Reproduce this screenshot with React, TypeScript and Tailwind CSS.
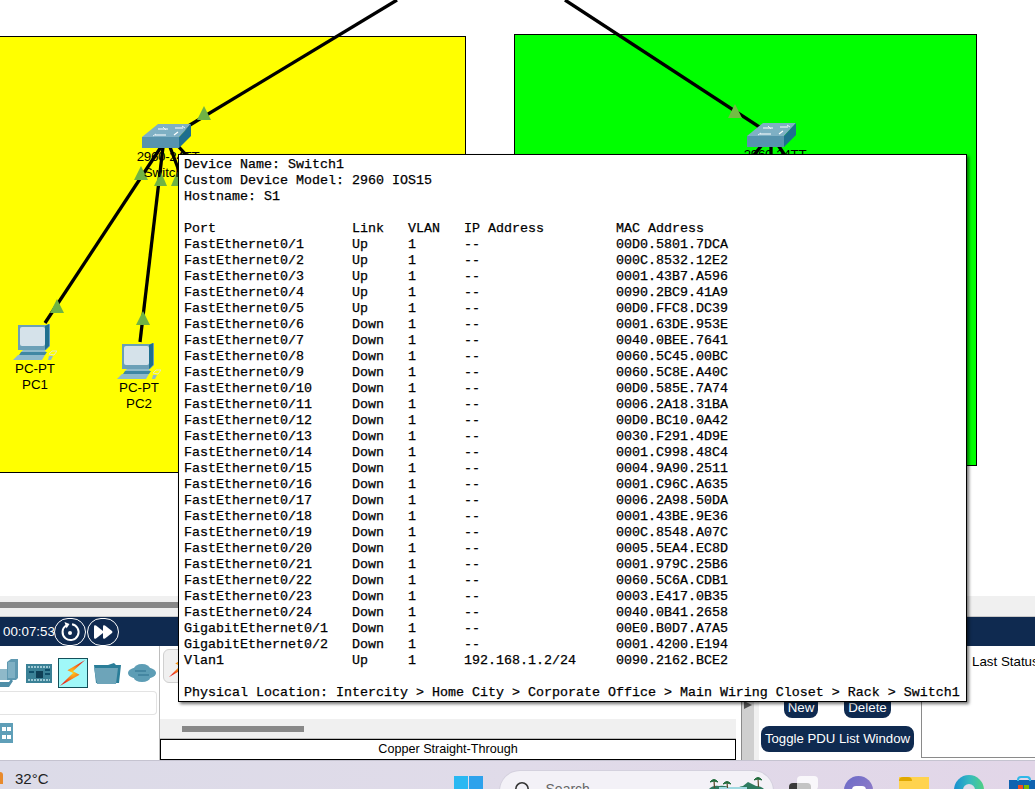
const ports: [string, string, string, string][] = [
  ["FastEthernet0/1", "Up", "--", "00D0.5801.7DCA"],
  ["FastEthernet0/2", "Up", "--", "000C.8532.12E2"],
  ["FastEthernet0/3", "Up", "--", "0001.43B7.A596"],
  ["FastEthernet0/4", "Up", "--", "0090.2BC9.41A9"],
  ["FastEthernet0/5", "Up", "--", "00D0.FFC8.DC39"],
  ["FastEthernet0/6", "Down", "--", "0001.63DE.953E"],
  ["FastEthernet0/7", "Down", "--", "0040.0BEE.7641"],
  ["FastEthernet0/8", "Down", "--", "0060.5C45.00BC"],
  ["FastEthernet0/9", "Down", "--", "0060.5C8E.A40C"],
  ["FastEthernet0/10", "Down", "--", "00D0.585E.7A74"],
  ["FastEthernet0/11", "Down", "--", "0006.2A18.31BA"],
  ["FastEthernet0/12", "Down", "--", "00D0.BC10.0A42"],
  ["FastEthernet0/13", "Down", "--", "0030.F291.4D9E"],
  ["FastEthernet0/14", "Down", "--", "0001.C998.48C4"],
  ["FastEthernet0/15", "Down", "--", "0004.9A90.2511"],
  ["FastEthernet0/16", "Down", "--", "0001.C96C.A635"],
  ["FastEthernet0/17", "Down", "--", "0006.2A98.50DA"],
  ["FastEthernet0/18", "Down", "--", "0001.43BE.9E36"],
  ["FastEthernet0/19", "Down", "--", "000C.8548.A07C"],
  ["FastEthernet0/20", "Down", "--", "0005.5EA4.EC8D"],
  ["FastEthernet0/21", "Down", "--", "0001.979C.25B6"],
  ["FastEthernet0/22", "Down", "--", "0060.5C6A.CDB1"],
  ["FastEthernet0/23", "Down", "--", "0003.E417.0B35"],
  ["FastEthernet0/24", "Down", "--", "0040.0B41.2658"],
  ["GigabitEthernet0/1", "Down", "--", "00E0.B0D7.A7A5"],
  ["GigabitEthernet0/2", "Down", "--", "0001.4200.E194"],
  ["Vlan1", "Up", "192.168.1.2/24", "0090.2162.BCE2"],
];

const row = (p: string, l: string, v: string, ip: string, mac: string) =>
  p.padEnd(21) + l.padEnd(7) + v.padEnd(7) + ip.padEnd(19) + mac;

const tooltipText = [
  "Device Name: Switch1",
  "Custom Device Model: 2960 IOS15",
  "Hostname: S1",
  "",
  row("Port", "Link", "VLAN", "IP Address", "MAC Address"),
  ...ports.map(([p, l, ip, mac]) => row(p, l, "1", ip, mac)),
  "",
  "Physical Location: Intercity > Home City > Corporate Office > Main Wiring Closet > Rack > Switch1",
].join("\n");

function Lightning({ size = 30 }: { size?: number }) {
  return (
    <svg width={size} height={size} viewBox="0 0 30 30">
      <defs>
        <radialGradient id="bolt" cx="50%" cy="48%" r="50%">
          <stop offset="0%" stopColor="#ffd21a" />
          <stop offset="55%" stopColor="#f7731c" />
          <stop offset="100%" stopColor="#e8281c" />
        </radialGradient>
      </defs>
      <path d="M28 1 L9 12 L15 15 L1 29 L22 17 L15 13 Z" fill="url(#bolt)" />
    </svg>
  );
}

function SwitchIcon() {
  return (
    <svg width="50" height="24" viewBox="0 0 50 24">
      <path d="M0 13 L16 0 L49 0 L37 13 Z" fill="#7fb0c4" />
      <path d="M0 13 H37 V24 H0 Z" fill="#5793ad" />
      <path d="M37 13 L49 0 V12 L37 24 Z" fill="#1f6f8f" />
      <path d="M13 11 H24 M32 11 L36 8 M16 5 H26 M33 4 H41" stroke="#fff" strokeWidth="1.2" />
      <path d="M11 12 L14 10 M21 3 L24 6 M40 2 L43 4" stroke="#e8f4f8" strokeWidth="1" />
    </svg>
  );
}

function PcIcon() {
  return (
    <svg width="44" height="37" viewBox="0 0 44 37">
      <path d="M5 1 L33 1 L37 0 V22 L33 26 H5 Z" fill="#6ba0b7" />
      <path d="M32 2 L36 0 V22 L32 26 Z" fill="#1f6f8f" />
      <rect x="7" y="3" width="25" height="19" rx="2" fill="#d5e2ea" />
      <path d="M10 26 H32 L33 28 H8 Z" fill="#8fbacb" />
      <path d="M8 28 H34 L32 31 H6 Z" fill="#3f87a3" />
      <path d="M5 31 H32 L29 36 H0 Z" fill="#8fbacb" />
      <path d="M36 30 L39 27 H44 L41 31 Z" fill="none" stroke="#e4e8c8" strokeWidth="1" />
      <path d="M35 36 L36 32 H40 L38 36 Z" fill="#8fb9c9" />
    </svg>
  );
}

function Replay() {
  return (
    <svg width="22" height="22" viewBox="0 0 22 22" fill="none">
      <path d="M7 4.5 A8 8 0 1 0 13 3.2" stroke="#fff" strokeWidth="2" />
      <path d="M5.5 1 L10.5 3 L7.5 7.5 Z" fill="#fff" />
      <circle cx="11" cy="12" r="2" fill="#fff" />
    </svg>
  );
}

function FastForward() {
  return (
    <svg width="20" height="16" viewBox="0 0 20 16" fill="#fff">
      <path d="M1 2.5 Q1 0.5 3 1.5 L10 7 Q11 8 10 9 L3 14.5 Q1 15.5 1 13.5 Z" />
      <path d="M10 2.5 Q10 0.5 12 1.5 L19 7 Q20 8 19 9 L12 14.5 Q10 15.5 10 13.5 Z" />
    </svg>
  );
}

function Palm({ x, y, h }: { x: number; y: number; h: number }) {
  return (
    <g>
      <path d={`M${x} ${y} L${x + 0.5} ${y + h}`} stroke="#5a4a2a" strokeWidth="1.2" />
      <path d={`M${x - 4} ${y + 2} Q${x} ${y - 3} ${x + 4} ${y + 2} Q${x} ${y} ${x - 4} ${y + 2} Z`} fill="#1f6a3a" stroke="#1f6a3a" />
    </g>
  );
}

export default function App() {
  return (
    <div className="relative flex h-[789px] w-[1035px] flex-col overflow-hidden bg-white font-['Liberation_Sans',sans-serif] text-[13.33px] text-black">
      {/* Logical workspace */}
      <div className="relative h-[596px] shrink-0 overflow-hidden bg-white">
        <div className="absolute left-[-2px] top-[36px] h-[437px] w-[468px] border border-black bg-[#ffff00]" />
        <div className="absolute left-[514px] top-[34px] h-[432px] w-[463px] border border-black bg-[#00ff00]" />

        <svg className="absolute inset-0" width="1035" height="596" viewBox="0 0 1035 596">
          <g stroke="#000" strokeWidth="3.3" fill="none">
            <path d="M397 0 L175 134" />
            <path d="M565 0 L770 134" />
            <path d="M161 147 L45 323" />
            <path d="M163 147 L140 342" />
            <path d="M170 147 L190 200" />
            <path d="M178 146 L200 170" />
            <path d="M762 145 L750 160" />
            <path d="M771 145 L771 160" />
            <path d="M778 145 L788 160" />
          </g>
          <g fill="#70b344">
            <path d="M204 106 L211 120 L197 120 Z" />
            <path d="M141 166 L148 180 L134 180 Z" />
            <path d="M161 172 L167 186 L154 186 Z" />
            <path d="M177 172 L184 186 L171 186 Z" />
            <path d="M57 299 L64 313 L50 313 Z" />
            <path d="M143 311 L150 325 L136 325 Z" />
          </g>
          <path d="M735 104 L742 118 L728 118 Z" fill="#72bd44" />
        </svg>

        <div className="absolute left-[142px] top-[124px]">
          <SwitchIcon />
        </div>
        <div className="absolute left-[747px] top-[123px]">
          <SwitchIcon />
        </div>
        <div className="absolute left-[118px] top-[149px] w-[100px] text-center leading-4">
          <div className="tracking-[-0.3px]">2960-24TT</div>
          <div className="pr-[2px]">Switch1</div>
        </div>
        <div className="absolute left-[725px] top-[147px] w-[100px] text-center leading-4 tracking-[-0.3px]">2960-24TT</div>

        <div className="absolute left-[13px] top-[324px]">
          <PcIcon />
        </div>
        <div className="absolute left-[-5px] top-[361px] w-[80px] text-center leading-4">
          <div>PC-PT</div>
          <div>PC1</div>
        </div>
        <div className="absolute left-[117px] top-[343px]">
          <PcIcon />
        </div>
        <div className="absolute left-[99px] top-[380px] w-[80px] text-center leading-4">
          <div>PC-PT</div>
          <div>PC2</div>
        </div>
      </div>

      {/* Scroll band */}
      <div className="flex h-[20px] shrink-0 items-start bg-[#f0f0f0] pt-[6px]">
        <div className="h-[6px] w-[180px] bg-[#888888]" />
      </div>

      {/* Realtime bar */}
      <div className="flex h-[30px] shrink-0 items-center border-t border-[#c8c8c8] bg-[#0f2a50] pl-[3px] text-white">
        <span className="w-[50px]">00:07:53</span>
        <div className="ml-[1px] flex h-[28px] w-[32px] items-center justify-center rounded-full border border-white">
          <Replay />
        </div>
        <div className="ml-px flex h-[28px] w-[32px] items-center justify-center rounded-full border border-white">
          <FastForward />
        </div>
      </div>

      {/* Bottom panels */}
      <div className="flex h-[114px] shrink-0 bg-white">
        <div className="flex w-[160px] shrink-0 flex-col border-r border-[#bdbdbd]">
          <div className="flex h-[45px] items-center pt-[9px]">
            <svg width="18" height="30" viewBox="0 0 18 30">
              <path d="M7 4 L11 1 H18 V20 L16 22 H7 Z" fill="#5f99b1" />
              <path d="M8 4 H15 V20 H8 Z" fill="#7fb0c4" />
              <path d="M0 11 H7 V22 H0 Z" fill="#8fb9c9" />
              <path d="M0 24 H9 L11 21 L13 23 L9 29 H0 Z" fill="#4f8ea8" />
            </svg>
            <svg className="ml-[8px]" width="26" height="19" viewBox="0 0 26 19">
              <rect width="26" height="19" fill="#3a8196" />
              <rect x="10" y="7" width="7" height="7" fill="#0f3f55" />
              <path d="M2 3 H24 M2 16 H24" stroke="#9cc8d4" strokeWidth="2" strokeDasharray="2 1" />
              <path d="M19 6 H24 M19 10 H24 M3 8 H8" stroke="#0f4f6a" strokeWidth="2" />
            </svg>
            <div className="ml-[6px] flex h-[30px] w-[30px] items-center justify-center border border-[#14505a] bg-[#a0f8f8]">
              <Lightning size={28} />
            </div>
            <svg className="ml-[6px]" width="27" height="21" viewBox="0 0 27 21">
              <path d="M0 2 H14 L20 0 L22 2 H27 L25 20 H2 Z" fill="#2a7d98" />
              <path d="M0 5 H24 L22 21 H3 Z" fill="#6da4b9" />
            </svg>
            <svg className="ml-[7px]" width="28" height="18" viewBox="0 0 28 18">
              <ellipse cx="14" cy="9" rx="14" ry="6.5" fill="#5d9db5" />
              <ellipse cx="14" cy="5" rx="8" ry="5" fill="#5d9db5" />
              <ellipse cx="14" cy="14" rx="8" ry="4" fill="#5d9db5" />
              <path d="M7 7 H18 M10 11 H21" stroke="#3c7f9a" strokeWidth="1.5" />
            </svg>
          </div>
          <div className="h-[24px] w-[157px] rounded-r-sm border border-l-0 border-[#e3e3e3]" />
          <div className="mt-[8px] grid h-[20px] w-[13px] grid-cols-2 place-items-center bg-[#5f9fb8] p-[2px]">
            <span className="h-[4px] w-[4px] bg-white" />
            <span className="h-[4px] w-[4px] bg-white" />
            <span className="h-[4px] w-[4px] bg-white" />
            <span className="h-[4px] w-[4px] bg-white" />
          </div>
        </div>

        <div className="flex w-[576px] shrink-0 flex-col">
          <div className="h-[73px] pl-[3px] pt-[3px]">
            <div className="flex h-[34px] w-[33px] items-center justify-center rounded-md border border-[#d0d0d0] bg-[#f0f0f0]">
              <Lightning size={24} />
            </div>
          </div>
          <div className="flex h-[20px] items-center border-b border-[#bdbdbd] bg-[#f0f0f0] pl-[22px]">
            <div className="h-[6px] w-[122px] bg-[#888888]" />
          </div>
          <div className="flex h-[21px] items-center justify-center border border-black bg-white text-[12.6px]">
            Copper Straight-Through
          </div>
        </div>

        <div className="relative ml-[5px] w-[13px] shrink-0 border-l border-[#8a8a8a] bg-[#ececec] bg-[radial-gradient(#cfcfcf_1px,transparent_1px)] bg-[length:2px_2px]">
          <div className="absolute left-[2px] top-[55px] h-0 w-0 border-y-[4px] border-l-[8px] border-y-transparent border-l-[#555555]" />
        </div>

        <div className="flex w-[167px] shrink-0 flex-col border-l-[5px] border-[#f0f0f0] pt-[54px]">
          <div className="ml-[25px] flex gap-[26px]">
            <div className="flex h-[18px] w-[34px] items-end justify-center rounded-b-lg bg-[#0f2a50] text-white">New</div>
            <div className="flex h-[18px] w-[47px] items-end justify-center rounded-b-lg bg-[#0f2a50] text-white">Delete</div>
          </div>
          <div className="ml-[2px] mt-[8px] flex h-[26px] w-[153px] items-center justify-center rounded-lg bg-[#0f2a50] text-[13.2px] text-white">
            Toggle PDU List Window
          </div>
        </div>

        <div className="h-[112px] flex-1 whitespace-nowrap border-b border-l border-[#8a8a8a] pl-[50px] pt-[6px]">Last Status</div>
      </div>

      {/* Taskbar */}
      <div className="relative flex h-[29px] flex-1 items-start overflow-hidden border-t border-[#c5c3d0] bg-gradient-to-r from-[#dcdbe8] via-[#e0dbe9] to-[#e2d6e8]">
        <div className="mt-[11px] h-[12px] w-[3px] rounded-tr-full bg-[#e88a2c]" />
        <span className="ml-[12px] mt-[9px] text-[15px] leading-[18px] text-[#222222]">32°C</span>
        <div className="ml-[405px] mt-[15px] grid h-[29px] w-[29px] shrink-0 grid-cols-2 gap-[1px]">
          <span className="bg-[#2ab8f2]" />
          <span className="bg-[#2ea2ec]" />
          <span className="bg-[#2a9fe8]" />
          <span className="bg-[#1f7fd8]" />
        </div>
        <div className="ml-[17px] mt-[10px] flex h-[40px] w-[273px] shrink-0 items-start rounded-[20px] bg-[#f3f1f7] pl-[14px] pr-[9px] pt-[10px] shadow-[0_0_0_1px_#d4d1de]">
          <svg width="18" height="18" viewBox="0 0 18 18" fill="none" stroke="#333" strokeWidth="1.6">
            <circle cx="8" cy="8" r="6.2" />
            <path d="M12.5 12.5 L17 17" />
          </svg>
          <span className="ml-[14px] mt-[-2px] text-[14px] leading-[20px] text-[#666666]">Search</span>
          <svg className="ml-auto mt-[-4px]" width="55" height="12" viewBox="0 0 55 12">
            <path d="M0 12 Q4 8 10 9 Q16 8 22 11 H28 Q32 9 34 9 L39 5 L47 9 Q52 9 55 12 Z" fill="#2d7a5f" />
            <rect x="10" y="10" width="28" height="2" fill="#9fd8e0" />
            <Palm x={5} y={3} h={8} />
            <Palm x={18} y={5} h={6} />
            <Palm x={49} y={1} h={9} />
          </svg>
        </div>
        <div className="absolute left-[789px] top-[15px] h-[14px] w-[29px]">
          <div className="absolute right-0 top-0 h-[14px] w-[21px] rounded-sm bg-white/80" />
          <div className="absolute left-0 top-[7px] h-[7px] w-[8px] rounded-tl-sm bg-[#3a3a3a]" />
          <div className="absolute left-[8px] top-[7px] h-[7px] w-[14px] rounded-tr-sm bg-[#c4c4c4]" />
        </div>
        <div className="absolute left-[844px] top-[15px] flex h-[29px] w-[29px] justify-center rounded-full bg-gradient-to-br from-[#6a6ac8] to-[#9a80c8] pt-[10px]">
          <div className="h-[10px] w-[14px] rounded-sm bg-white" />
        </div>
        <div className="absolute left-[899px] top-[16px] h-[24px] w-[30px] bg-[#ffd34e]">
          <div className="h-[4px] w-[13px] rounded-t-sm bg-[#e0a800]" />
        </div>
        <div className="absolute left-[954px] top-[14px] h-[30px] w-[30px] rounded-full bg-gradient-to-r from-[#1a8fd0] via-[#35b8c0] to-[#50d080] p-[9px]">
          <div className="h-[12px] w-[12px] rounded-full bg-[#e0dbe9]" />
        </div>
        <div className="absolute left-[1009px] top-[19px] h-[20px] w-[30px] bg-[#0f63b0]">
          <div className="absolute left-[8px] top-[-4px] h-[5px] w-[14px] rounded-t border-2 border-b-0 border-[#30b8e8]" />
          <div className="absolute left-[9px] top-[5px] h-[5px] w-[5px] bg-[#f25022]" />
          <div className="absolute left-[15px] top-[5px] h-[5px] w-[5px] bg-[#7fba00]" />
        </div>
      </div>

      {/* Device tooltip */}
      <div className="absolute left-[178px] top-[154px] h-[548px] w-[789px] border border-black bg-white pl-[5px] pt-[2px] shadow-[2px_2px_3px_rgba(0,0,0,0.55)]">
        <pre className="font-['Liberation_Mono',monospace] text-[13.33px] leading-[16px] text-black [-webkit-text-stroke:0.25px_black]">{tooltipText}</pre>
      </div>
    </div>
  );
}
